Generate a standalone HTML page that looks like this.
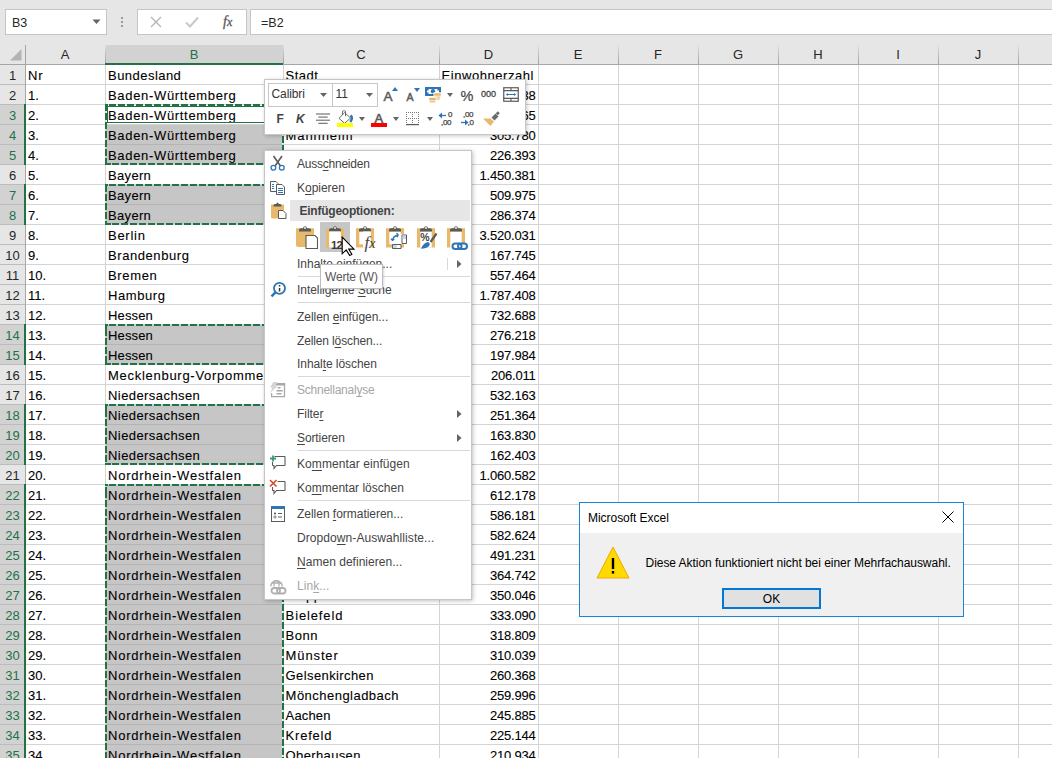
<!DOCTYPE html><html><head><meta charset="utf-8"><style>
*{box-sizing:border-box}
html,body{margin:0;padding:0}
body{width:1052px;height:758px;overflow:hidden;position:relative;background:#fff;font-family:"Liberation Sans", sans-serif;}
.a{position:absolute}
.t{position:absolute;white-space:pre;line-height:1;color:#000}
.cell{font-size:13px;-webkit-text-stroke:0.1px #000;letter-spacing:0.55px}
.num{font-size:13px;-webkit-text-stroke:0.1px #000;letter-spacing:-0.2px}
.hd{font-size:13px;color:#333;}
.mi{position:absolute;left:297px;font-size:11.7px;color:#262626;white-space:pre;line-height:1}
.u{text-decoration:underline;text-underline-offset:2px;text-decoration-thickness:1px}
</style></head><body>

<div class="a" style="left:0;top:0;width:1052px;height:45px;background:#e6e6e6"></div>
<div class="a" style="left:5px;top:9px;width:102px;height:26px;background:#fff;border:1px solid #c6c6c6"></div>
<div class="t" style="left:12px;top:17px;font-size:12.5px;color:#262626">B3</div>
<svg class="a" style="left:92px;top:19px" width="9" height="6"><path d="M0.5 0.5 L8.5 0.5 L4.5 5 Z" fill="#646464"/></svg>
<div class="a" style="left:121px;top:17px;width:2px;height:2px;background:#9a9a9a"></div>
<div class="a" style="left:121px;top:21px;width:2px;height:2px;background:#9a9a9a"></div>
<div class="a" style="left:121px;top:25px;width:2px;height:2px;background:#9a9a9a"></div>
<div class="a" style="left:137px;top:9px;width:110px;height:26px;background:#fff;border:1px solid #c6c6c6"></div>
<svg class="a" style="left:150px;top:16px" width="12" height="12"><path d="M1 1 L11 11 M11 1 L1 11" stroke="#b4b4b4" stroke-width="1.3"/></svg>
<svg class="a" style="left:185px;top:16px" width="14" height="12"><path d="M1 6.5 L5 10.5 L13 1.5" stroke="#c8c8c8" stroke-width="2" fill="none"/></svg>
<div class="t" style="left:223px;top:15px;font-family:'Liberation Serif',serif;font-style:italic;font-size:14px;color:#595959;-webkit-text-stroke:0.3px #595959">f<span style="font-size:12px">x</span></div>
<div class="a" style="left:250px;top:9px;width:810px;height:26px;background:#fff;border:1px solid #c6c6c6"></div>
<div class="t" style="left:261px;top:17px;font-size:12.5px;color:#262626">=B2</div>
<div class="a" style="left:0;top:45px;width:1052px;height:19px;background:#e6e6e6"></div>
<div class="a" style="left:0;top:64px;width:25px;height:694px;background:#e6e6e6"></div>
<div class="a" style="left:106px;top:45px;width:177px;height:19px;background:#d2d2d2"></div>
<svg class="a" style="left:0;top:45px" width="25" height="19"><path d="M10 15.5 L21.5 4 L21.5 15.5 Z" fill="#b4b4b4"/></svg>
<div class="a" style="left:0;top:105px;width:24px;height:19px;background:#d2d2d2"></div>
<div class="a" style="left:0;top:125px;width:24px;height:19px;background:#d2d2d2"></div>
<div class="a" style="left:0;top:145px;width:24px;height:19px;background:#d2d2d2"></div>
<div class="a" style="left:0;top:185px;width:24px;height:19px;background:#d2d2d2"></div>
<div class="a" style="left:0;top:205px;width:24px;height:19px;background:#d2d2d2"></div>
<div class="a" style="left:0;top:325px;width:24px;height:19px;background:#d2d2d2"></div>
<div class="a" style="left:0;top:345px;width:24px;height:19px;background:#d2d2d2"></div>
<div class="a" style="left:0;top:405px;width:24px;height:19px;background:#d2d2d2"></div>
<div class="a" style="left:0;top:425px;width:24px;height:19px;background:#d2d2d2"></div>
<div class="a" style="left:0;top:445px;width:24px;height:19px;background:#d2d2d2"></div>
<div class="a" style="left:0;top:485px;width:24px;height:19px;background:#d2d2d2"></div>
<div class="a" style="left:0;top:505px;width:24px;height:19px;background:#d2d2d2"></div>
<div class="a" style="left:0;top:525px;width:24px;height:19px;background:#d2d2d2"></div>
<div class="a" style="left:0;top:545px;width:24px;height:19px;background:#d2d2d2"></div>
<div class="a" style="left:0;top:565px;width:24px;height:19px;background:#d2d2d2"></div>
<div class="a" style="left:0;top:585px;width:24px;height:19px;background:#d2d2d2"></div>
<div class="a" style="left:0;top:605px;width:24px;height:19px;background:#d2d2d2"></div>
<div class="a" style="left:0;top:625px;width:24px;height:19px;background:#d2d2d2"></div>
<div class="a" style="left:0;top:645px;width:24px;height:19px;background:#d2d2d2"></div>
<div class="a" style="left:0;top:665px;width:24px;height:19px;background:#d2d2d2"></div>
<div class="a" style="left:0;top:685px;width:24px;height:19px;background:#d2d2d2"></div>
<div class="a" style="left:0;top:705px;width:24px;height:19px;background:#d2d2d2"></div>
<div class="a" style="left:0;top:725px;width:24px;height:19px;background:#d2d2d2"></div>
<div class="a" style="left:0;top:745px;width:24px;height:19px;background:#d2d2d2"></div>
<div class="a" style="left:106px;top:124px;width:176px;height:20px;background:#c6c6c6"></div>
<div class="a" style="left:106px;top:144px;width:176px;height:20px;background:#c6c6c6"></div>
<div class="a" style="left:106px;top:184px;width:176px;height:20px;background:#c6c6c6"></div>
<div class="a" style="left:106px;top:204px;width:176px;height:20px;background:#c6c6c6"></div>
<div class="a" style="left:106px;top:324px;width:176px;height:20px;background:#c6c6c6"></div>
<div class="a" style="left:106px;top:344px;width:176px;height:20px;background:#c6c6c6"></div>
<div class="a" style="left:106px;top:404px;width:176px;height:20px;background:#c6c6c6"></div>
<div class="a" style="left:106px;top:424px;width:176px;height:20px;background:#c6c6c6"></div>
<div class="a" style="left:106px;top:444px;width:176px;height:20px;background:#c6c6c6"></div>
<div class="a" style="left:106px;top:484px;width:176px;height:20px;background:#c6c6c6"></div>
<div class="a" style="left:106px;top:504px;width:176px;height:20px;background:#c6c6c6"></div>
<div class="a" style="left:106px;top:524px;width:176px;height:20px;background:#c6c6c6"></div>
<div class="a" style="left:106px;top:544px;width:176px;height:20px;background:#c6c6c6"></div>
<div class="a" style="left:106px;top:564px;width:176px;height:20px;background:#c6c6c6"></div>
<div class="a" style="left:106px;top:584px;width:176px;height:20px;background:#c6c6c6"></div>
<div class="a" style="left:106px;top:604px;width:176px;height:20px;background:#c6c6c6"></div>
<div class="a" style="left:106px;top:624px;width:176px;height:20px;background:#c6c6c6"></div>
<div class="a" style="left:106px;top:644px;width:176px;height:20px;background:#c6c6c6"></div>
<div class="a" style="left:106px;top:664px;width:176px;height:20px;background:#c6c6c6"></div>
<div class="a" style="left:106px;top:684px;width:176px;height:20px;background:#c6c6c6"></div>
<div class="a" style="left:106px;top:704px;width:176px;height:20px;background:#c6c6c6"></div>
<div class="a" style="left:106px;top:724px;width:176px;height:20px;background:#c6c6c6"></div>
<div class="a" style="left:106px;top:744px;width:176px;height:20px;background:#c6c6c6"></div>
<div class="a" style="left:25px;top:84px;width:1027px;height:1px;background:#d4d4d4"></div>
<div class="a" style="left:0;top:84px;width:25px;height:1px;background:#bcbcbc"></div>
<div class="a" style="left:25px;top:104px;width:1027px;height:1px;background:#d4d4d4"></div>
<div class="a" style="left:0;top:104px;width:25px;height:1px;background:#bcbcbc"></div>
<div class="a" style="left:25px;top:124px;width:1027px;height:1px;background:#d4d4d4"></div>
<div class="a" style="left:0;top:124px;width:25px;height:1px;background:#bcbcbc"></div>
<div class="a" style="left:25px;top:144px;width:1027px;height:1px;background:#d4d4d4"></div>
<div class="a" style="left:0;top:144px;width:25px;height:1px;background:#bcbcbc"></div>
<div class="a" style="left:25px;top:164px;width:1027px;height:1px;background:#d4d4d4"></div>
<div class="a" style="left:0;top:164px;width:25px;height:1px;background:#bcbcbc"></div>
<div class="a" style="left:25px;top:184px;width:1027px;height:1px;background:#d4d4d4"></div>
<div class="a" style="left:0;top:184px;width:25px;height:1px;background:#bcbcbc"></div>
<div class="a" style="left:25px;top:204px;width:1027px;height:1px;background:#d4d4d4"></div>
<div class="a" style="left:0;top:204px;width:25px;height:1px;background:#bcbcbc"></div>
<div class="a" style="left:25px;top:224px;width:1027px;height:1px;background:#d4d4d4"></div>
<div class="a" style="left:0;top:224px;width:25px;height:1px;background:#bcbcbc"></div>
<div class="a" style="left:25px;top:244px;width:1027px;height:1px;background:#d4d4d4"></div>
<div class="a" style="left:0;top:244px;width:25px;height:1px;background:#bcbcbc"></div>
<div class="a" style="left:25px;top:264px;width:1027px;height:1px;background:#d4d4d4"></div>
<div class="a" style="left:0;top:264px;width:25px;height:1px;background:#bcbcbc"></div>
<div class="a" style="left:25px;top:284px;width:1027px;height:1px;background:#d4d4d4"></div>
<div class="a" style="left:0;top:284px;width:25px;height:1px;background:#bcbcbc"></div>
<div class="a" style="left:25px;top:304px;width:1027px;height:1px;background:#d4d4d4"></div>
<div class="a" style="left:0;top:304px;width:25px;height:1px;background:#bcbcbc"></div>
<div class="a" style="left:25px;top:324px;width:1027px;height:1px;background:#d4d4d4"></div>
<div class="a" style="left:0;top:324px;width:25px;height:1px;background:#bcbcbc"></div>
<div class="a" style="left:25px;top:344px;width:1027px;height:1px;background:#d4d4d4"></div>
<div class="a" style="left:0;top:344px;width:25px;height:1px;background:#bcbcbc"></div>
<div class="a" style="left:25px;top:364px;width:1027px;height:1px;background:#d4d4d4"></div>
<div class="a" style="left:0;top:364px;width:25px;height:1px;background:#bcbcbc"></div>
<div class="a" style="left:25px;top:384px;width:1027px;height:1px;background:#d4d4d4"></div>
<div class="a" style="left:0;top:384px;width:25px;height:1px;background:#bcbcbc"></div>
<div class="a" style="left:25px;top:404px;width:1027px;height:1px;background:#d4d4d4"></div>
<div class="a" style="left:0;top:404px;width:25px;height:1px;background:#bcbcbc"></div>
<div class="a" style="left:25px;top:424px;width:1027px;height:1px;background:#d4d4d4"></div>
<div class="a" style="left:0;top:424px;width:25px;height:1px;background:#bcbcbc"></div>
<div class="a" style="left:25px;top:444px;width:1027px;height:1px;background:#d4d4d4"></div>
<div class="a" style="left:0;top:444px;width:25px;height:1px;background:#bcbcbc"></div>
<div class="a" style="left:25px;top:464px;width:1027px;height:1px;background:#d4d4d4"></div>
<div class="a" style="left:0;top:464px;width:25px;height:1px;background:#bcbcbc"></div>
<div class="a" style="left:25px;top:484px;width:1027px;height:1px;background:#d4d4d4"></div>
<div class="a" style="left:0;top:484px;width:25px;height:1px;background:#bcbcbc"></div>
<div class="a" style="left:25px;top:504px;width:1027px;height:1px;background:#d4d4d4"></div>
<div class="a" style="left:0;top:504px;width:25px;height:1px;background:#bcbcbc"></div>
<div class="a" style="left:25px;top:524px;width:1027px;height:1px;background:#d4d4d4"></div>
<div class="a" style="left:0;top:524px;width:25px;height:1px;background:#bcbcbc"></div>
<div class="a" style="left:25px;top:544px;width:1027px;height:1px;background:#d4d4d4"></div>
<div class="a" style="left:0;top:544px;width:25px;height:1px;background:#bcbcbc"></div>
<div class="a" style="left:25px;top:564px;width:1027px;height:1px;background:#d4d4d4"></div>
<div class="a" style="left:0;top:564px;width:25px;height:1px;background:#bcbcbc"></div>
<div class="a" style="left:25px;top:584px;width:1027px;height:1px;background:#d4d4d4"></div>
<div class="a" style="left:0;top:584px;width:25px;height:1px;background:#bcbcbc"></div>
<div class="a" style="left:25px;top:604px;width:1027px;height:1px;background:#d4d4d4"></div>
<div class="a" style="left:0;top:604px;width:25px;height:1px;background:#bcbcbc"></div>
<div class="a" style="left:25px;top:624px;width:1027px;height:1px;background:#d4d4d4"></div>
<div class="a" style="left:0;top:624px;width:25px;height:1px;background:#bcbcbc"></div>
<div class="a" style="left:25px;top:644px;width:1027px;height:1px;background:#d4d4d4"></div>
<div class="a" style="left:0;top:644px;width:25px;height:1px;background:#bcbcbc"></div>
<div class="a" style="left:25px;top:664px;width:1027px;height:1px;background:#d4d4d4"></div>
<div class="a" style="left:0;top:664px;width:25px;height:1px;background:#bcbcbc"></div>
<div class="a" style="left:25px;top:684px;width:1027px;height:1px;background:#d4d4d4"></div>
<div class="a" style="left:0;top:684px;width:25px;height:1px;background:#bcbcbc"></div>
<div class="a" style="left:25px;top:704px;width:1027px;height:1px;background:#d4d4d4"></div>
<div class="a" style="left:0;top:704px;width:25px;height:1px;background:#bcbcbc"></div>
<div class="a" style="left:25px;top:724px;width:1027px;height:1px;background:#d4d4d4"></div>
<div class="a" style="left:0;top:724px;width:25px;height:1px;background:#bcbcbc"></div>
<div class="a" style="left:25px;top:744px;width:1027px;height:1px;background:#d4d4d4"></div>
<div class="a" style="left:0;top:744px;width:25px;height:1px;background:#bcbcbc"></div>
<div class="a" style="left:25px;top:764px;width:1027px;height:1px;background:#d4d4d4"></div>
<div class="a" style="left:0;top:764px;width:25px;height:1px;background:#bcbcbc"></div>
<div class="a" style="left:106px;top:144px;width:176px;height:1px;background:#b4b4b4"></div>
<div class="a" style="left:106px;top:204px;width:176px;height:1px;background:#b4b4b4"></div>
<div class="a" style="left:106px;top:344px;width:176px;height:1px;background:#b4b4b4"></div>
<div class="a" style="left:106px;top:424px;width:176px;height:1px;background:#b4b4b4"></div>
<div class="a" style="left:106px;top:444px;width:176px;height:1px;background:#b4b4b4"></div>
<div class="a" style="left:106px;top:504px;width:176px;height:1px;background:#b4b4b4"></div>
<div class="a" style="left:106px;top:524px;width:176px;height:1px;background:#b4b4b4"></div>
<div class="a" style="left:106px;top:544px;width:176px;height:1px;background:#b4b4b4"></div>
<div class="a" style="left:106px;top:564px;width:176px;height:1px;background:#b4b4b4"></div>
<div class="a" style="left:106px;top:584px;width:176px;height:1px;background:#b4b4b4"></div>
<div class="a" style="left:106px;top:604px;width:176px;height:1px;background:#b4b4b4"></div>
<div class="a" style="left:106px;top:624px;width:176px;height:1px;background:#b4b4b4"></div>
<div class="a" style="left:106px;top:644px;width:176px;height:1px;background:#b4b4b4"></div>
<div class="a" style="left:106px;top:664px;width:176px;height:1px;background:#b4b4b4"></div>
<div class="a" style="left:106px;top:684px;width:176px;height:1px;background:#b4b4b4"></div>
<div class="a" style="left:106px;top:704px;width:176px;height:1px;background:#b4b4b4"></div>
<div class="a" style="left:106px;top:724px;width:176px;height:1px;background:#b4b4b4"></div>
<div class="a" style="left:106px;top:744px;width:176px;height:1px;background:#b4b4b4"></div>
<div class="a" style="left:105px;top:64px;width:1px;height:694px;background:#d4d4d4"></div>
<div class="a" style="left:105px;top:45px;width:1px;height:19px;background:linear-gradient(#e0e0e0,#9f9f9f)"></div>
<div class="a" style="left:283px;top:64px;width:1px;height:694px;background:#d4d4d4"></div>
<div class="a" style="left:283px;top:45px;width:1px;height:19px;background:linear-gradient(#e0e0e0,#9f9f9f)"></div>
<div class="a" style="left:439px;top:64px;width:1px;height:694px;background:#d4d4d4"></div>
<div class="a" style="left:439px;top:45px;width:1px;height:19px;background:linear-gradient(#e0e0e0,#9f9f9f)"></div>
<div class="a" style="left:538px;top:64px;width:1px;height:694px;background:#d4d4d4"></div>
<div class="a" style="left:538px;top:45px;width:1px;height:19px;background:linear-gradient(#e0e0e0,#9f9f9f)"></div>
<div class="a" style="left:618px;top:64px;width:1px;height:694px;background:#d4d4d4"></div>
<div class="a" style="left:618px;top:45px;width:1px;height:19px;background:linear-gradient(#e0e0e0,#9f9f9f)"></div>
<div class="a" style="left:698px;top:64px;width:1px;height:694px;background:#d4d4d4"></div>
<div class="a" style="left:698px;top:45px;width:1px;height:19px;background:linear-gradient(#e0e0e0,#9f9f9f)"></div>
<div class="a" style="left:778px;top:64px;width:1px;height:694px;background:#d4d4d4"></div>
<div class="a" style="left:778px;top:45px;width:1px;height:19px;background:linear-gradient(#e0e0e0,#9f9f9f)"></div>
<div class="a" style="left:858px;top:64px;width:1px;height:694px;background:#d4d4d4"></div>
<div class="a" style="left:858px;top:45px;width:1px;height:19px;background:linear-gradient(#e0e0e0,#9f9f9f)"></div>
<div class="a" style="left:938px;top:64px;width:1px;height:694px;background:#d4d4d4"></div>
<div class="a" style="left:938px;top:45px;width:1px;height:19px;background:linear-gradient(#e0e0e0,#9f9f9f)"></div>
<div class="a" style="left:1018px;top:64px;width:1px;height:694px;background:#d4d4d4"></div>
<div class="a" style="left:1018px;top:45px;width:1px;height:19px;background:linear-gradient(#e0e0e0,#9f9f9f)"></div>
<div class="a" style="left:1098px;top:64px;width:1px;height:694px;background:#d4d4d4"></div>
<div class="a" style="left:1098px;top:45px;width:1px;height:19px;background:linear-gradient(#e0e0e0,#9f9f9f)"></div>
<div class="a" style="left:0;top:64px;width:1052px;height:1px;background:#a6a6a6"></div>
<div class="a" style="left:25px;top:45px;width:1px;height:713px;background:#a6a6a6"></div>
<div class="a" style="left:105px;top:63px;width:178px;height:2px;background:#217346"></div>
<div class="a" style="left:24px;top:104px;width:2px;height:21px;background:#217346"></div>
<div class="a" style="left:24px;top:124px;width:2px;height:21px;background:#217346"></div>
<div class="a" style="left:24px;top:144px;width:2px;height:21px;background:#217346"></div>
<div class="a" style="left:24px;top:184px;width:2px;height:21px;background:#217346"></div>
<div class="a" style="left:24px;top:204px;width:2px;height:21px;background:#217346"></div>
<div class="a" style="left:24px;top:324px;width:2px;height:21px;background:#217346"></div>
<div class="a" style="left:24px;top:344px;width:2px;height:21px;background:#217346"></div>
<div class="a" style="left:24px;top:404px;width:2px;height:21px;background:#217346"></div>
<div class="a" style="left:24px;top:424px;width:2px;height:21px;background:#217346"></div>
<div class="a" style="left:24px;top:444px;width:2px;height:21px;background:#217346"></div>
<div class="a" style="left:24px;top:484px;width:2px;height:21px;background:#217346"></div>
<div class="a" style="left:24px;top:504px;width:2px;height:21px;background:#217346"></div>
<div class="a" style="left:24px;top:524px;width:2px;height:21px;background:#217346"></div>
<div class="a" style="left:24px;top:544px;width:2px;height:21px;background:#217346"></div>
<div class="a" style="left:24px;top:564px;width:2px;height:21px;background:#217346"></div>
<div class="a" style="left:24px;top:584px;width:2px;height:21px;background:#217346"></div>
<div class="a" style="left:24px;top:604px;width:2px;height:21px;background:#217346"></div>
<div class="a" style="left:24px;top:624px;width:2px;height:21px;background:#217346"></div>
<div class="a" style="left:24px;top:644px;width:2px;height:21px;background:#217346"></div>
<div class="a" style="left:24px;top:664px;width:2px;height:21px;background:#217346"></div>
<div class="a" style="left:24px;top:684px;width:2px;height:21px;background:#217346"></div>
<div class="a" style="left:24px;top:704px;width:2px;height:21px;background:#217346"></div>
<div class="a" style="left:24px;top:724px;width:2px;height:21px;background:#217346"></div>
<div class="a" style="left:24px;top:744px;width:2px;height:21px;background:#217346"></div>
<div class="t hd" style="left:25px;width:80px;text-align:center;top:48px;color:#262626">A</div>
<div class="t hd" style="left:105px;width:178px;text-align:center;top:48px;color:#217346">B</div>
<div class="t hd" style="left:283px;width:156px;text-align:center;top:48px;color:#262626">C</div>
<div class="t hd" style="left:439px;width:99px;text-align:center;top:48px;color:#262626">D</div>
<div class="t hd" style="left:538px;width:80px;text-align:center;top:48px;color:#262626">E</div>
<div class="t hd" style="left:618px;width:80px;text-align:center;top:48px;color:#262626">F</div>
<div class="t hd" style="left:698px;width:80px;text-align:center;top:48px;color:#262626">G</div>
<div class="t hd" style="left:778px;width:80px;text-align:center;top:48px;color:#262626">H</div>
<div class="t hd" style="left:858px;width:80px;text-align:center;top:48px;color:#262626">I</div>
<div class="t hd" style="left:938px;width:80px;text-align:center;top:48px;color:#262626">J</div>
<div class="t hd" style="left:1018px;width:80px;text-align:center;top:48px;color:#262626">K</div>
<div class="t hd" style="left:0;width:25px;text-align:center;top:69px;color:#262626">1</div>
<div class="t hd" style="left:0;width:25px;text-align:center;top:89px;color:#262626">2</div>
<div class="t hd" style="left:0;width:25px;text-align:center;top:109px;color:#217346">3</div>
<div class="t hd" style="left:0;width:25px;text-align:center;top:129px;color:#217346">4</div>
<div class="t hd" style="left:0;width:25px;text-align:center;top:149px;color:#217346">5</div>
<div class="t hd" style="left:0;width:25px;text-align:center;top:169px;color:#262626">6</div>
<div class="t hd" style="left:0;width:25px;text-align:center;top:189px;color:#217346">7</div>
<div class="t hd" style="left:0;width:25px;text-align:center;top:209px;color:#217346">8</div>
<div class="t hd" style="left:0;width:25px;text-align:center;top:229px;color:#262626">9</div>
<div class="t hd" style="left:0;width:25px;text-align:center;top:249px;color:#262626">10</div>
<div class="t hd" style="left:0;width:25px;text-align:center;top:269px;color:#262626">11</div>
<div class="t hd" style="left:0;width:25px;text-align:center;top:289px;color:#262626">12</div>
<div class="t hd" style="left:0;width:25px;text-align:center;top:309px;color:#262626">13</div>
<div class="t hd" style="left:0;width:25px;text-align:center;top:329px;color:#217346">14</div>
<div class="t hd" style="left:0;width:25px;text-align:center;top:349px;color:#217346">15</div>
<div class="t hd" style="left:0;width:25px;text-align:center;top:369px;color:#262626">16</div>
<div class="t hd" style="left:0;width:25px;text-align:center;top:389px;color:#262626">17</div>
<div class="t hd" style="left:0;width:25px;text-align:center;top:409px;color:#217346">18</div>
<div class="t hd" style="left:0;width:25px;text-align:center;top:429px;color:#217346">19</div>
<div class="t hd" style="left:0;width:25px;text-align:center;top:449px;color:#217346">20</div>
<div class="t hd" style="left:0;width:25px;text-align:center;top:469px;color:#262626">21</div>
<div class="t hd" style="left:0;width:25px;text-align:center;top:489px;color:#217346">22</div>
<div class="t hd" style="left:0;width:25px;text-align:center;top:509px;color:#217346">23</div>
<div class="t hd" style="left:0;width:25px;text-align:center;top:529px;color:#217346">24</div>
<div class="t hd" style="left:0;width:25px;text-align:center;top:549px;color:#217346">25</div>
<div class="t hd" style="left:0;width:25px;text-align:center;top:569px;color:#217346">26</div>
<div class="t hd" style="left:0;width:25px;text-align:center;top:589px;color:#217346">27</div>
<div class="t hd" style="left:0;width:25px;text-align:center;top:609px;color:#217346">28</div>
<div class="t hd" style="left:0;width:25px;text-align:center;top:629px;color:#217346">29</div>
<div class="t hd" style="left:0;width:25px;text-align:center;top:649px;color:#217346">30</div>
<div class="t hd" style="left:0;width:25px;text-align:center;top:669px;color:#217346">31</div>
<div class="t hd" style="left:0;width:25px;text-align:center;top:689px;color:#217346">32</div>
<div class="t hd" style="left:0;width:25px;text-align:center;top:709px;color:#217346">33</div>
<div class="t hd" style="left:0;width:25px;text-align:center;top:729px;color:#217346">34</div>
<div class="t hd" style="left:0;width:25px;text-align:center;top:749px;color:#217346">35</div>
<div class="t cell" style="left:28px;top:69px;letter-spacing:0.8px">Nr</div>
<div class="t cell" style="left:108px;top:69px;letter-spacing:0.465px">Bundesland</div>
<div class="t cell" style="left:285.5px;top:69px;letter-spacing:0.471px">Stadt</div>
<div class="t cell" style="left:441.5px;top:69px;letter-spacing:0.561px">Einwohnerzahl</div>
<div class="t cell" style="left:28px;top:89px;letter-spacing:0px">1.</div>
<div class="t cell" style="left:108px;top:89px;letter-spacing:0.675px">Baden-Württemberg</div>
<div class="t cell" style="left:285.6px;top:89px;letter-spacing:0.55px">Stuttgart</div>
<div class="t num" style="right:516.4px;top:89px">623.738</div>
<div class="t cell" style="left:28px;top:109px;letter-spacing:0px">2.</div>
<div class="t cell" style="left:108px;top:109px;letter-spacing:0.675px">Baden-Württemberg</div>
<div class="t cell" style="left:285.6px;top:109px;letter-spacing:0.55px">Karlsruhe</div>
<div class="t num" style="right:516.4px;top:109px">307.265</div>
<div class="t cell" style="left:28px;top:129px;letter-spacing:0px">3.</div>
<div class="t cell" style="left:108px;top:129px;letter-spacing:0.675px">Baden-Württemberg</div>
<div class="t cell" style="left:285.6px;top:129px;letter-spacing:0.89px">Mannheim</div>
<div class="t num" style="right:516.4px;top:129px">305.780</div>
<div class="t cell" style="left:28px;top:149px;letter-spacing:0px">4.</div>
<div class="t cell" style="left:108px;top:149px;letter-spacing:0.675px">Baden-Württemberg</div>
<div class="t cell" style="left:285.6px;top:149px;letter-spacing:0.55px">Freiburg im Breisgau</div>
<div class="t num" style="right:516.4px;top:149px">226.393</div>
<div class="t cell" style="left:28px;top:169px;letter-spacing:0px">5.</div>
<div class="t cell" style="left:108px;top:169px;letter-spacing:0.333px">Bayern</div>
<div class="t cell" style="left:285.6px;top:169px;letter-spacing:0.55px">München</div>
<div class="t num" style="right:516.4px;top:169px">1.450.381</div>
<div class="t cell" style="left:28px;top:189px;letter-spacing:0px">6.</div>
<div class="t cell" style="left:108px;top:189px;letter-spacing:0.333px">Bayern</div>
<div class="t cell" style="left:285.6px;top:189px;letter-spacing:0.55px">Nürnberg</div>
<div class="t num" style="right:516.4px;top:189px">509.975</div>
<div class="t cell" style="left:28px;top:209px;letter-spacing:0px">7.</div>
<div class="t cell" style="left:108px;top:209px;letter-spacing:0.333px">Bayern</div>
<div class="t cell" style="left:285.6px;top:209px;letter-spacing:0.55px">Augsburg</div>
<div class="t num" style="right:516.4px;top:209px">286.374</div>
<div class="t cell" style="left:28px;top:229px;letter-spacing:0px">8.</div>
<div class="t cell" style="left:108px;top:229px;letter-spacing:0.724px">Berlin</div>
<div class="t cell" style="left:285.6px;top:229px;letter-spacing:0.724px">Berlin</div>
<div class="t num" style="right:516.4px;top:229px">3.520.031</div>
<div class="t cell" style="left:28px;top:249px;letter-spacing:0px">9.</div>
<div class="t cell" style="left:108px;top:249px;letter-spacing:0.569px">Brandenburg</div>
<div class="t cell" style="left:285.6px;top:249px;letter-spacing:0.55px">Potsdam</div>
<div class="t num" style="right:516.4px;top:249px">167.745</div>
<div class="t cell" style="left:28px;top:269px;letter-spacing:0px">10.</div>
<div class="t cell" style="left:108px;top:269px;letter-spacing:0.667px">Bremen</div>
<div class="t cell" style="left:285.6px;top:269px;letter-spacing:0.667px">Bremen</div>
<div class="t num" style="right:516.4px;top:269px">557.464</div>
<div class="t cell" style="left:28px;top:289px;letter-spacing:0px">11.</div>
<div class="t cell" style="left:108px;top:289px;letter-spacing:0.565px">Hamburg</div>
<div class="t cell" style="left:285.6px;top:289px;letter-spacing:0.565px">Hamburg</div>
<div class="t num" style="right:516.4px;top:289px">1.787.408</div>
<div class="t cell" style="left:28px;top:309px;letter-spacing:0px">12.</div>
<div class="t cell" style="left:108px;top:309px;letter-spacing:0.155px">Hessen</div>
<div class="t cell" style="left:285.6px;top:309px;letter-spacing:0.55px">Frankfurt am Main</div>
<div class="t num" style="right:516.4px;top:309px">732.688</div>
<div class="t cell" style="left:28px;top:329px;letter-spacing:0px">13.</div>
<div class="t cell" style="left:108px;top:329px;letter-spacing:0.155px">Hessen</div>
<div class="t cell" style="left:285.6px;top:329px;letter-spacing:0.55px">Wiesbaden</div>
<div class="t num" style="right:516.4px;top:329px">276.218</div>
<div class="t cell" style="left:28px;top:349px;letter-spacing:0px">14.</div>
<div class="t cell" style="left:108px;top:349px;letter-spacing:0.155px">Hessen</div>
<div class="t cell" style="left:285.6px;top:349px;letter-spacing:0.55px">Kassel</div>
<div class="t num" style="right:516.4px;top:349px">197.984</div>
<div class="t cell" style="left:28px;top:369px;letter-spacing:0px">15.</div>
<div class="t cell" style="left:108px;top:369px;letter-spacing:0.72px">Mecklenburg-Vorpommern</div>
<div class="t cell" style="left:285.6px;top:369px;letter-spacing:0.55px">Rostock</div>
<div class="t num" style="right:516.4px;top:369px">206.011</div>
<div class="t cell" style="left:28px;top:389px;letter-spacing:0px">16.</div>
<div class="t cell" style="left:108px;top:389px;letter-spacing:0.428px">Niedersachsen</div>
<div class="t cell" style="left:285.6px;top:389px;letter-spacing:0.55px">Hannover</div>
<div class="t num" style="right:516.4px;top:389px">532.163</div>
<div class="t cell" style="left:28px;top:409px;letter-spacing:0px">17.</div>
<div class="t cell" style="left:108px;top:409px;letter-spacing:0.428px">Niedersachsen</div>
<div class="t cell" style="left:285.6px;top:409px;letter-spacing:0.55px">Braunschweig</div>
<div class="t num" style="right:516.4px;top:409px">251.364</div>
<div class="t cell" style="left:28px;top:429px;letter-spacing:0px">18.</div>
<div class="t cell" style="left:108px;top:429px;letter-spacing:0.428px">Niedersachsen</div>
<div class="t cell" style="left:285.6px;top:429px;letter-spacing:0.55px">Oldenburg</div>
<div class="t num" style="right:516.4px;top:429px">163.830</div>
<div class="t cell" style="left:28px;top:449px;letter-spacing:0px">19.</div>
<div class="t cell" style="left:108px;top:449px;letter-spacing:0.428px">Niedersachsen</div>
<div class="t cell" style="left:285.6px;top:449px;letter-spacing:0.55px">Osnabrück</div>
<div class="t num" style="right:516.4px;top:449px">162.403</div>
<div class="t cell" style="left:28px;top:469px;letter-spacing:0px">20.</div>
<div class="t cell" style="left:108px;top:469px;letter-spacing:0.771px">Nordrhein-Westfalen</div>
<div class="t cell" style="left:285.6px;top:469px;letter-spacing:0.55px">Köln</div>
<div class="t num" style="right:516.4px;top:469px">1.060.582</div>
<div class="t cell" style="left:28px;top:489px;letter-spacing:0px">21.</div>
<div class="t cell" style="left:108px;top:489px;letter-spacing:0.771px">Nordrhein-Westfalen</div>
<div class="t cell" style="left:285.6px;top:489px;letter-spacing:0.55px">Düsseldorf</div>
<div class="t num" style="right:516.4px;top:489px">612.178</div>
<div class="t cell" style="left:28px;top:509px;letter-spacing:0px">22.</div>
<div class="t cell" style="left:108px;top:509px;letter-spacing:0.771px">Nordrhein-Westfalen</div>
<div class="t cell" style="left:285.6px;top:509px;letter-spacing:0.55px">Dortmund</div>
<div class="t num" style="right:516.4px;top:509px">586.181</div>
<div class="t cell" style="left:28px;top:529px;letter-spacing:0px">23.</div>
<div class="t cell" style="left:108px;top:529px;letter-spacing:0.771px">Nordrhein-Westfalen</div>
<div class="t cell" style="left:285.6px;top:529px;letter-spacing:0.55px">Essen</div>
<div class="t num" style="right:516.4px;top:529px">582.624</div>
<div class="t cell" style="left:28px;top:549px;letter-spacing:0px">24.</div>
<div class="t cell" style="left:108px;top:549px;letter-spacing:0.771px">Nordrhein-Westfalen</div>
<div class="t cell" style="left:285.6px;top:549px;letter-spacing:0.55px">Duisburg</div>
<div class="t num" style="right:516.4px;top:549px">491.231</div>
<div class="t cell" style="left:28px;top:569px;letter-spacing:0px">25.</div>
<div class="t cell" style="left:108px;top:569px;letter-spacing:0.771px">Nordrhein-Westfalen</div>
<div class="t cell" style="left:285.6px;top:569px;letter-spacing:0.55px">Bochum</div>
<div class="t num" style="right:516.4px;top:569px">364.742</div>
<div class="t cell" style="left:28px;top:589px;letter-spacing:0px">26.</div>
<div class="t cell" style="left:108px;top:589px;letter-spacing:0.771px">Nordrhein-Westfalen</div>
<div class="t cell" style="left:285.6px;top:589px;letter-spacing:0.55px">Wuppertal</div>
<div class="t num" style="right:516.4px;top:589px">350.046</div>
<div class="t cell" style="left:28px;top:609px;letter-spacing:0px">27.</div>
<div class="t cell" style="left:108px;top:609px;letter-spacing:0.771px">Nordrhein-Westfalen</div>
<div class="t cell" style="left:285.6px;top:609px;letter-spacing:0.873px">Bielefeld</div>
<div class="t num" style="right:516.4px;top:609px">333.090</div>
<div class="t cell" style="left:28px;top:629px;letter-spacing:0px">28.</div>
<div class="t cell" style="left:108px;top:629px;letter-spacing:0.771px">Nordrhein-Westfalen</div>
<div class="t cell" style="left:285.6px;top:629px;letter-spacing:0.498px">Bonn</div>
<div class="t num" style="right:516.4px;top:629px">318.809</div>
<div class="t cell" style="left:28px;top:649px;letter-spacing:0px">29.</div>
<div class="t cell" style="left:108px;top:649px;letter-spacing:0.771px">Nordrhein-Westfalen</div>
<div class="t cell" style="left:285.6px;top:649px;letter-spacing:0.874px">Münster</div>
<div class="t num" style="right:516.4px;top:649px">310.039</div>
<div class="t cell" style="left:28px;top:669px;letter-spacing:0px">30.</div>
<div class="t cell" style="left:108px;top:669px;letter-spacing:0.771px">Nordrhein-Westfalen</div>
<div class="t cell" style="left:285.6px;top:669px;letter-spacing:0.396px">Gelsenkirchen</div>
<div class="t num" style="right:516.4px;top:669px">260.368</div>
<div class="t cell" style="left:28px;top:689px;letter-spacing:0px">31.</div>
<div class="t cell" style="left:108px;top:689px;letter-spacing:0.771px">Nordrhein-Westfalen</div>
<div class="t cell" style="left:285.6px;top:689px;letter-spacing:0.472px">Mönchengladbach</div>
<div class="t num" style="right:516.4px;top:689px">259.996</div>
<div class="t cell" style="left:28px;top:709px;letter-spacing:0px">32.</div>
<div class="t cell" style="left:108px;top:709px;letter-spacing:0.771px">Nordrhein-Westfalen</div>
<div class="t cell" style="left:285.6px;top:709px;letter-spacing:0.153px">Aachen</div>
<div class="t num" style="right:516.4px;top:709px">245.885</div>
<div class="t cell" style="left:28px;top:729px;letter-spacing:0px">33.</div>
<div class="t cell" style="left:108px;top:729px;letter-spacing:0.771px">Nordrhein-Westfalen</div>
<div class="t cell" style="left:285.6px;top:729px;letter-spacing:0.778px">Krefeld</div>
<div class="t num" style="right:516.4px;top:729px">225.144</div>
<div class="t cell" style="left:28px;top:749px;letter-spacing:0px">34.</div>
<div class="t cell" style="left:108px;top:749px;letter-spacing:0.771px">Nordrhein-Westfalen</div>
<div class="t cell" style="left:285.6px;top:749px;letter-spacing:0.367px">Oberhausen</div>
<div class="t num" style="right:516.4px;top:749px">210.934</div>
<div class="a" style="left:105px;top:104px;width:2px;height:61px;background:repeating-linear-gradient(180deg,#217346 0 7px,transparent 7px 9px);background-position:0 0px"></div>
<div class="a" style="left:282px;top:104px;width:2px;height:61px;background:repeating-linear-gradient(180deg,#217346 0 7px,transparent 7px 9px);background-position:0 5px"></div>
<div class="a" style="left:105px;top:104px;width:179px;height:2px;background:repeating-linear-gradient(90deg,#217346 0 7px,transparent 7px 9px);background-position:4px 0"></div>
<div class="a" style="left:105px;top:163px;width:179px;height:2px;background:repeating-linear-gradient(90deg,#217346 0 7px,transparent 7px 9px);background-position:7px 0"></div>
<div class="a" style="left:105px;top:184px;width:2px;height:41px;background:repeating-linear-gradient(180deg,#217346 0 7px,transparent 7px 9px);background-position:0 1px"></div>
<div class="a" style="left:282px;top:184px;width:2px;height:41px;background:repeating-linear-gradient(180deg,#217346 0 7px,transparent 7px 9px);background-position:0 6px"></div>
<div class="a" style="left:105px;top:184px;width:179px;height:2px;background:repeating-linear-gradient(90deg,#217346 0 7px,transparent 7px 9px);background-position:4px 0"></div>
<div class="a" style="left:105px;top:223px;width:179px;height:2px;background:repeating-linear-gradient(90deg,#217346 0 7px,transparent 7px 9px);background-position:7px 0"></div>
<div class="a" style="left:105px;top:324px;width:2px;height:41px;background:repeating-linear-gradient(180deg,#217346 0 7px,transparent 7px 9px);background-position:0 5px"></div>
<div class="a" style="left:282px;top:324px;width:2px;height:41px;background:repeating-linear-gradient(180deg,#217346 0 7px,transparent 7px 9px);background-position:0 1px"></div>
<div class="a" style="left:105px;top:324px;width:179px;height:2px;background:repeating-linear-gradient(90deg,#217346 0 7px,transparent 7px 9px);background-position:4px 0"></div>
<div class="a" style="left:105px;top:363px;width:179px;height:2px;background:repeating-linear-gradient(90deg,#217346 0 7px,transparent 7px 9px);background-position:7px 0"></div>
<div class="a" style="left:105px;top:404px;width:2px;height:61px;background:repeating-linear-gradient(180deg,#217346 0 7px,transparent 7px 9px);background-position:0 6px"></div>
<div class="a" style="left:282px;top:404px;width:2px;height:61px;background:repeating-linear-gradient(180deg,#217346 0 7px,transparent 7px 9px);background-position:0 2px"></div>
<div class="a" style="left:105px;top:404px;width:179px;height:2px;background:repeating-linear-gradient(90deg,#217346 0 7px,transparent 7px 9px);background-position:4px 0"></div>
<div class="a" style="left:105px;top:463px;width:179px;height:2px;background:repeating-linear-gradient(90deg,#217346 0 7px,transparent 7px 9px);background-position:7px 0"></div>
<div class="a" style="left:105px;top:484px;width:2px;height:301px;background:repeating-linear-gradient(180deg,#217346 0 7px,transparent 7px 9px);background-position:0 7px"></div>
<div class="a" style="left:282px;top:484px;width:2px;height:301px;background:repeating-linear-gradient(180deg,#217346 0 7px,transparent 7px 9px);background-position:0 3px"></div>
<div class="a" style="left:105px;top:484px;width:179px;height:2px;background:repeating-linear-gradient(90deg,#217346 0 7px,transparent 7px 9px);background-position:4px 0"></div>
<div class="a" style="left:105px;top:783px;width:179px;height:2px;background:repeating-linear-gradient(90deg,#217346 0 7px,transparent 7px 9px);background-position:7px 0"></div>
<div class="a" style="left:107px;top:106px;width:176px;height:17px;border:1px solid #217346;border-right:none"></div>
<div class="a" style="left:264px;top:79px;width:262px;height:56px;background:#fff;border:1px solid #c6c6c6;box-shadow:1px 1px 4px rgba(0,0,0,0.22)"></div>
<div class="a" style="left:268px;top:83px;width:65px;height:24px;border:1px solid #c6c6c6;background:#fff"></div>
<div class="t" style="left:271.5px;top:88.34px;font-size:12px;color:#333;letter-spacing:-0.1px">Calibri</div>
<svg class="a" style="left:320px;top:93px" width="7" height="4"><path d="M0 0H7L3.5 4Z" fill="#646464"/></svg>
<div class="a" style="left:332px;top:83px;width:46px;height:24px;border:1px solid #c6c6c6;background:#fff"></div>
<div class="t" style="left:335.5px;top:88.34px;font-size:12px;color:#333;">11</div>
<svg class="a" style="left:366px;top:93px" width="7" height="4"><path d="M0 0H7L3.5 4Z" fill="#646464"/></svg>
<div class="t" style="left:383.5px;top:89.57px;font-size:13.5px;color:#5a5a5a;-webkit-text-stroke:0.5px #5a5a5a">A</div>
<svg class="a" style="left:392px;top:87px" width="6" height="4"><path d="M0 4H6L3 0Z" fill="#2e75b6"/></svg>
<div class="t" style="left:406.5px;top:92.11px;font-size:10.5px;color:#5a5a5a;-webkit-text-stroke:0.5px #5a5a5a">A</div>
<svg class="a" style="left:414px;top:88px" width="6" height="4"><path d="M0 0H6L3 4Z" fill="#2e75b6"/></svg>
<svg class="a" style="left:424px;top:86px" width="18" height="18"><rect x="1" y="1" width="16" height="9" fill="#2e75b6"/><rect x="3" y="3" width="12" height="5" fill="#fff"/><path d="M3 3H4.6V4.6H3Z M13.4 3H15V4.6H13.4Z M3 6.4H4.6V8H3Z" fill="#2e75b6"/><circle cx="9" cy="5.3" r="2.2" fill="#2e75b6"/><path d="M9.5 6.3H18V15H9.5Z" fill="#fff"/><rect x="10" y="7.2" width="7" height="2.6" rx="1.3" fill="#e8b96a"/><rect x="10.6" y="10.6" width="5.8" height="1.1" fill="#e8b96a"/><rect x="11.2" y="12.5" width="4.6" height="1.1" fill="#e8b96a"/><path d="M4.5 11H12.5V18H4.5Z" fill="#fff"/><rect x="5" y="11.8" width="7" height="2.6" rx="1.3" fill="#e8b96a"/><rect x="5.6" y="15.3" width="5.8" height="1.1" fill="#e8b96a"/></svg>
<svg class="a" style="left:447px;top:93px" width="6" height="4"><path d="M0 0H6L3 4Z" fill="#646464"/></svg>
<div class="t" style="left:460.5px;top:88.93px;font-size:14.5px;color:#444;-webkit-text-stroke:0.2px #444">%</div>
<div class="t" style="left:481px;top:90.38px;font-size:9px;color:#444;letter-spacing:0px;-webkit-text-stroke:0.3px #444">000</div>
<svg class="a" style="left:503px;top:87px" width="16" height="15"><rect x="0.75" y="0.75" width="14.5" height="13.5" fill="none" stroke="#5a5a5a" stroke-width="1.2"/><path d="M0.75 3.6H15M0.75 11.4H15M8 0.75V3.6M8 11.4V14" stroke="#5a5a5a" stroke-width="1.1"/><path d="M3.5 7.5H12.5" stroke="#2e75b6" stroke-width="1"/><path d="M3 7.5L5 6V9Z M13 7.5L11 6V9Z" fill="#2e75b6"/></svg>
<div class="t" style="left:276.5px;top:112.84px;font-size:12px;color:#444;font-weight:bold">F</div>
<div class="t" style="left:296px;top:112.84px;font-size:12px;color:#444;font-weight:bold;font-style:italic">K</div>
<svg class="a" style="left:316px;top:113px" width="14" height="11"><path d="M0 1H14M2.3 4.1H11.7M0 7.2H14M2.3 10.3H11.7" stroke="#5a5a5a" stroke-width="1"/></svg>
<svg class="a" style="left:336px;top:110px" width="18" height="18"><path d="M3 8.3L8.6 2.6L14.6 8L8.6 13.3Z" fill="#fff" stroke="#5a5a5a" stroke-width="0.9"/><path d="M6.5 4.5V1.5Q6.5 0.8 7.5 0.8H8.5Q9.5 0.8 9.5 1.5V6.2" fill="none" stroke="#5a5a5a" stroke-width="0.9"/><path d="M14.5 5.5Q17.5 7.5 14.3 12" stroke="#2e75b6" stroke-width="2.4" fill="none"/><rect x="1" y="13" width="16" height="4" fill="#ffff00"/></svg>
<svg class="a" style="left:359px;top:117px" width="6" height="4"><path d="M0 0H6L3 4Z" fill="#646464"/></svg>
<div class="t" style="left:374.5px;top:111.60px;font-size:13px;color:#5a5a5a;-webkit-text-stroke:0.6px #5a5a5a">A</div>
<div class="a" style="left:371px;top:123px;width:16px;height:4px;background:#ff0000"></div>
<svg class="a" style="left:393px;top:117px" width="6" height="4"><path d="M0 0H6L3 4Z" fill="#646464"/></svg>
<svg class="a" style="left:406px;top:112px" width="14" height="14"><rect x="0" y="0" width="1" height="1" fill="#7a7a7a"/><rect x="2" y="0" width="1" height="1" fill="#7a7a7a"/><rect x="4" y="0" width="1" height="1" fill="#7a7a7a"/><rect x="6" y="0" width="1" height="1" fill="#7a7a7a"/><rect x="8" y="0" width="1" height="1" fill="#7a7a7a"/><rect x="10" y="0" width="1" height="1" fill="#7a7a7a"/><rect x="12" y="0" width="1" height="1" fill="#7a7a7a"/><rect x="0" y="2" width="1" height="1" fill="#7a7a7a"/><rect x="6" y="2" width="1" height="1" fill="#7a7a7a"/><rect x="12" y="2" width="1" height="1" fill="#7a7a7a"/><rect x="0" y="4" width="1" height="1" fill="#7a7a7a"/><rect x="6" y="4" width="1" height="1" fill="#7a7a7a"/><rect x="12" y="4" width="1" height="1" fill="#7a7a7a"/><rect x="0" y="6" width="1" height="1" fill="#7a7a7a"/><rect x="2" y="6" width="1" height="1" fill="#7a7a7a"/><rect x="4" y="6" width="1" height="1" fill="#7a7a7a"/><rect x="6" y="6" width="1" height="1" fill="#7a7a7a"/><rect x="8" y="6" width="1" height="1" fill="#7a7a7a"/><rect x="10" y="6" width="1" height="1" fill="#7a7a7a"/><rect x="12" y="6" width="1" height="1" fill="#7a7a7a"/><rect x="0" y="8" width="1" height="1" fill="#7a7a7a"/><rect x="6" y="8" width="1" height="1" fill="#7a7a7a"/><rect x="12" y="8" width="1" height="1" fill="#7a7a7a"/><rect x="0" y="10" width="1" height="1" fill="#7a7a7a"/><rect x="6" y="10" width="1" height="1" fill="#7a7a7a"/><rect x="12" y="10" width="1" height="1" fill="#7a7a7a"/><rect x="0" y="12" width="13" height="1.2" fill="#5a5a5a"/></svg>
<svg class="a" style="left:427px;top:117px" width="6" height="4"><path d="M0 0H6L3 4Z" fill="#646464"/></svg>
<svg class="a" style="left:438px;top:112px" width="9" height="7"><path d="M1.5 3.5H8" stroke="#2e75b6" stroke-width="1.3"/><path d="M0.5 3.5L4 0.5V6.5Z" fill="#2e75b6"/></svg>
<div class="t" style="left:448px;top:110.83px;font-size:8px;color:#444;-webkit-text-stroke:0.25px #444">0</div>
<div class="t" style="left:441px;top:119.23px;font-size:8px;color:#444;-webkit-text-stroke:0.25px #444;letter-spacing:-0.3px">,00</div>
<div class="t" style="left:463px;top:110.83px;font-size:8px;color:#444;-webkit-text-stroke:0.25px #444;letter-spacing:-0.3px">,00</div>
<svg class="a" style="left:460px;top:119px" width="9" height="7"><path d="M1 3.5H7.5" stroke="#2e75b6" stroke-width="1.3"/><path d="M8.5 3.5L5 0.5V6.5Z" fill="#2e75b6"/></svg>
<div class="t" style="left:467.5px;top:119.23px;font-size:8px;color:#444;-webkit-text-stroke:0.25px #444;letter-spacing:-0.3px">,0</div>
<svg class="a" style="left:482px;top:111px" width="18" height="16"><path d="M9.5 6.5L13.5 2.5L16.5 5.5L12.5 9.5Z" fill="#6a6a6a"/><path d="M13.8 2.2L15.8 0.2L17.8 2.2L15.8 4.2Z" fill="#6a6a6a"/><path d="M1 7.5H8.5L12 10.5L8.5 15Z" fill="#e8b96a"/></svg>
<div class="a" style="left:264px;top:150px;width:208px;height:450px;background:#fff;border:1px solid #c6c6c6;box-shadow:1px 1px 4px rgba(0,0,0,0.25)"></div>
<div class="t" style="left:297px;top:158.14px;font-size:12px;color:#444444;letter-spacing:-0.235px">Auss<span class="u">c</span>hneiden</div>
<div class="t" style="left:297px;top:181.84px;font-size:12px;color:#444444;letter-spacing:-0.034px">K<span class="u">o</span>pieren</div>
<div class="a" style="left:290px;top:200px;width:180px;height:21px;background:#e6e6e6"></div>
<div class="t" style="left:299.5px;top:205.14px;font-size:12px;color:#444;font-weight:bold;letter-spacing:-0.235px">Einfügeoptionen:</div>
<div class="a" style="left:320px;top:222px;width:30px;height:30px;background:#c6c6c6"></div>
<div class="t" style="left:297px;top:258.24px;font-size:12px;color:#444444;letter-spacing:-0.011px">Inhal<span class="u">t</span>e einfügen...</div>
<div class="a" style="left:447px;top:258px;width:1px;height:12px;background:#d9d9d9"></div>
<svg class="a" style="left:457px;top:260px" width="5" height="8"><path d="M0 0L4.5 4L0 8Z" fill="#646464"/></svg>
<div class="a" style="left:298px;top:276px;width:172px;height:1px;background:#d9d9d9"></div>
<div class="t" style="left:297px;top:283.94px;font-size:12px;color:#444444;letter-spacing:-0.05px">Intelligente <span class="u">S</span>uche</div>
<div class="a" style="left:298px;top:302px;width:172px;height:1px;background:#d9d9d9"></div>
<div class="t" style="left:297px;top:311.14px;font-size:12px;color:#444444;letter-spacing:-0.05px">Zellen <span class="u">e</span>infügen...</div>
<div class="t" style="left:297px;top:335.14px;font-size:12px;color:#444444;letter-spacing:-0.136px">Zellen l<span class="u">ö</span>schen...</div>
<div class="t" style="left:297px;top:358.44px;font-size:12px;color:#444444;letter-spacing:-0.066px">Inhal<span class="u">t</span>e löschen</div>
<div class="a" style="left:298px;top:376px;width:172px;height:1px;background:#d9d9d9"></div>
<div class="t" style="left:297px;top:384.44px;font-size:12px;color:#a6a6a6;letter-spacing:-0.244px">Schnellanal<span class="u">y</span>se</div>
<div class="t" style="left:297px;top:408.44px;font-size:12px;color:#444444;letter-spacing:-0.059px">Filte<span class="u">r</span></div>
<svg class="a" style="left:457px;top:410px" width="5" height="8"><path d="M0 0L4.5 4L0 8Z" fill="#646464"/></svg>
<div class="t" style="left:297px;top:432.44px;font-size:12px;color:#444444;letter-spacing:-0.112px"><span class="u">S</span>ortieren</div>
<svg class="a" style="left:457px;top:434px" width="5" height="8"><path d="M0 0L4.5 4L0 8Z" fill="#646464"/></svg>
<div class="a" style="left:298px;top:450px;width:172px;height:1px;background:#d9d9d9"></div>
<div class="t" style="left:297px;top:458.24px;font-size:12px;color:#444444;letter-spacing:0.082px">Ko<span class="u">m</span>mentar einfügen</div>
<div class="t" style="left:297px;top:482.24px;font-size:12px;color:#444444;letter-spacing:0.005px">Ko<span class="u">m</span>mentar löschen</div>
<div class="a" style="left:298px;top:500px;width:172px;height:1px;background:#d9d9d9"></div>
<div class="t" style="left:297px;top:508.24px;font-size:12px;color:#444444;letter-spacing:-0.025px">Zellen <span class="u">f</span>ormatieren...</div>
<div class="t" style="left:297px;top:532.44px;font-size:12px;color:#444444;letter-spacing:0.079px">Dropdo<span class="u">w</span>n-Auswahlliste...</div>
<div class="t" style="left:297px;top:556.14px;font-size:12px;color:#444444;letter-spacing:0.027px"><span class="u">N</span>amen definieren...</div>
<div class="t" style="left:297px;top:580.44px;font-size:12px;color:#a6a6a6;letter-spacing:0.032px">Lin<span class="u">k</span>...</div>
<svg class="a" style="left:268px;top:154px" width="20" height="20"><path d="M5.5 2L12.5 12M14 2L7 12" stroke="#5a5a5a" stroke-width="1.6"/><circle cx="5.4" cy="13.8" r="2.4" fill="#fff" stroke="#2e75b6" stroke-width="1.3"/><circle cx="13.8" cy="13.8" r="2.4" fill="#fff" stroke="#2e75b6" stroke-width="1.3"/></svg>
<svg class="a" style="left:268px;top:179px" width="20" height="18"><path d="M2.5 2.5H8L10 4.5V12.5H2.5Z" fill="#fff" stroke="#5a5a5a" stroke-width="1"/><path d="M4 5.5H6M4 7.5H6M4 9.5H6" stroke="#2e75b6"/><path d="M8.5 5.5H14L16.5 8V15.5H8.5Z" fill="#fff" stroke="#5a5a5a" stroke-width="1"/><path d="M10 9.5H15M10 11.5H15M10 13.5H15" stroke="#2e75b6"/></svg>
<svg class="a" style="left:270px;top:202px" width="17" height="18"><path d="M1 2.5H14V16.5H2.5Q1 16.5 1 15Z" fill="#e8b96a"/><path d="M3.5 4.5V3.5Q3.5 2 5 2H6.3Q6.5 0.5 7.5 0.5Q8.5 0.5 8.7 2H10Q11.5 2 11.5 3.5V4.5Z" fill="#5a5a5a"/><path d="M8.5 8.5H13L16 11.5V16.5H8.5Z" fill="#fff" stroke="#5a5a5a" stroke-width="1"/></svg>
<svg class="a" style="left:296px;top:226px" width="24" height="24"><path d="M0 2.2H18V21H2Q0 21 0 19Z" fill="#e8b96a"/><path d="M3 5.5V3.8Q3 2.2 5 2.2H7Q7.3 0.3 9 0.3Q10.7 0.3 11 2.2H13Q15 2.2 15 3.8V5.5Z" fill="#5a5a5a"/><circle cx="9" cy="2" r="0.9" fill="#fff"/><path d="M10 9.5H19L21.5 12V22.5H10Z" fill="#fff" stroke="#5a5a5a" stroke-width="1.1"/></svg>
<svg class="a" style="left:326px;top:226px" width="24" height="24"><path d="M0 2.2H18V21.5H0Z" fill="#e8b96a"/><path d="M3.3 5.5H14.7V18.3H3.3Z" fill="#fff"/><path d="M3 5.5V3.8Q3 2.2 5 2.2H7Q7.3 0.3 9 0.3Q10.7 0.3 11 2.2H13Q15 2.2 15 3.8V5.5Z" fill="#5a5a5a"/><circle cx="9" cy="2" r="0.9" fill="#fff"/><path d="M3.3 18H14.7V21.5H3.3Z" fill="#fff"/><path d="M3.3 5.5H14.7V18.5H3.3Z" fill="#fff"/></svg>
<div class="t" style="left:331px;top:240.13px;font-size:11.3px;color:#3a3a3a;font-weight:bold;letter-spacing:-0.9px">12</div>
<svg class="a" style="left:356px;top:226px" width="24" height="24"><path d="M0 2.2H18V21.5H0Z" fill="#e8b96a"/><path d="M3.3 5.5H14.7V18.3H3.3Z" fill="#fff"/><path d="M3 5.5V3.8Q3 2.2 5 2.2H7Q7.3 0.3 9 0.3Q10.7 0.3 11 2.2H13Q15 2.2 15 3.8V5.5Z" fill="#5a5a5a"/><circle cx="9" cy="2" r="0.9" fill="#fff"/><path d="M7 5.5H14.7V21.5H7Z" fill="#fff"/></svg>
<div class="t" style="left:364.5px;top:233.61px;font-size:17px;color:#444;font-family:'Liberation Serif',serif;font-style:italic">f<span style="font-size:14px">x</span></div>
<svg class="a" style="left:386px;top:226px" width="24" height="24"><path d="M0 2.2H18V21.5H0Z" fill="#e8b96a"/><path d="M3.3 5.5H14.7V18.3H3.3Z" fill="#fff"/><path d="M3 5.5V3.8Q3 2.2 5 2.2H7Q7.3 0.3 9 0.3Q10.7 0.3 11 2.2H13Q15 2.2 15 3.8V5.5Z" fill="#5a5a5a"/><circle cx="9" cy="2" r="0.9" fill="#fff"/><path d="M6 18.3H14.7V21.5H6Z M14 8H18V18.3H14Z" fill="#fff"/><path d="M6.5 14.5Q7 10 12.5 9M12.5 9L10.5 7.2M12.5 9L10.8 11M6.5 14.5L5 12.7M6.5 14.5L8.3 13" stroke="#2e75b6" stroke-width="1.3" fill="none"/><path d="M6.5 18.5H15V22.5H6.5Z" fill="#fff" stroke="#5a5a5a" stroke-width="1"/><path d="M7 19H10.7V22H7Z" fill="#bdd7ee"/><path d="M16 9H20.5V17.5H16Z" fill="#fff" stroke="#5a5a5a" stroke-width="1"/><path d="M16.5 9.5H20V13H16.5Z" fill="#bdd7ee"/></svg>
<svg class="a" style="left:417px;top:226px" width="24" height="24"><path d="M0 2.2H18V21.5H0Z" fill="#e8b96a"/><path d="M3.3 5.5H14.7V18.3H3.3Z" fill="#fff"/><path d="M3 5.5V3.8Q3 2.2 5 2.2H7Q7.3 0.3 9 0.3Q10.7 0.3 11 2.2H13Q15 2.2 15 3.8V5.5Z" fill="#5a5a5a"/><circle cx="9" cy="2" r="0.9" fill="#fff"/><path d="M3.3 18H14.7V21.5H3.3Z" fill="#fff"/><path d="M13.5 16L19.5 7.5" stroke="#5a5a5a" stroke-width="2.2"/><path d="M4 22.8Q6 17 11 16Q14 17.5 12 20Q9.5 22.8 4 22.8Z" fill="#2e75b6"/></svg>
<div class="t" style="left:420.3px;top:231.91px;font-size:10.5px;color:#444;font-weight:bold;letter-spacing:-0.5px">%</div>
<svg class="a" style="left:447px;top:226px" width="24" height="24"><path d="M0 2.2H18V21.5H0Z" fill="#e8b96a"/><path d="M3.3 5.5H14.7V18.3H3.3Z" fill="#fff"/><path d="M3 5.5V3.8Q3 2.2 5 2.2H7Q7.3 0.3 9 0.3Q10.7 0.3 11 2.2H13Q15 2.2 15 3.8V5.5Z" fill="#5a5a5a"/><circle cx="9" cy="2" r="0.9" fill="#fff"/><path d="M3.3 17H20V24H3.3Z" fill="#fff"/><rect x="5.5" y="17.5" width="9" height="5.5" rx="2.75" fill="none" stroke="#2e75b6" stroke-width="2"/><rect x="11" y="17.5" width="9" height="5.5" rx="2.75" fill="none" stroke="#2e75b6" stroke-width="2"/></svg>
<svg class="a" style="left:268px;top:280px" width="20" height="18"><circle cx="11.5" cy="8.3" r="5.5" fill="#fff" stroke="#2e75b6" stroke-width="1.8"/><path d="M7.5 12.3L3.5 16.3" stroke="#2e75b6" stroke-width="2.4"/><rect x="10.8" y="8" width="1.5" height="3.5" fill="#333"/><rect x="10.8" y="5" width="1.5" height="1.5" fill="#333"/></svg>
<svg class="a" style="left:269px;top:382px" width="17" height="16"><path d="M15.5 2V14.6H2.6V11" fill="none" stroke="#a8a8a8" stroke-width="1.3"/><path d="M7.5 1.1H16.2V3.6H6.3Z" fill="#a8a8a8"/><path d="M8.7 5.7H11.5M7.5 8.8H13.8M7.5 11.8H12.5" stroke="#a8a8a8" stroke-width="1.4"/><path d="M4.3 0H8.2L6.2 4.3H8.6L1 11L3.6 5.5H1.2Z" fill="#d4d4d4"/></svg>
<svg class="a" style="left:268px;top:454px" width="20" height="18"><path d="M6.5 2.5H16.5Q17 2.5 17 3V11Q17 11.5 16.5 11.5H8.5L6 14.5V11.5H5Q4.5 11.5 4.5 11V8" fill="none" stroke="#5a5a5a" stroke-width="1.1"/><path d="M2 4.5H8M5 1.5V7.5" stroke="#3d9970" stroke-width="1.8"/></svg>
<svg class="a" style="left:268px;top:478px" width="20" height="18"><path d="M9.5 3.5H16.5Q17 3.5 17 4V12Q17 12.5 16.5 12.5H8.5L6 15.5V12.5H5Q4.5 12.5 4.5 12V9" fill="none" stroke="#5a5a5a" stroke-width="1.1"/><path d="M2 2L8.5 8.5M8.5 2L2 8.5" stroke="#d9472b" stroke-width="1.6"/></svg>
<svg class="a" style="left:270px;top:505px" width="17" height="18"><rect x="1.5" y="1.5" width="13" height="15" fill="#fff" stroke="#5a5a5a" stroke-width="1"/><rect x="1" y="1" width="14" height="3" fill="#2e75b6"/><circle cx="5" cy="8.5" r="1.1" fill="#5a5a5a"/><circle cx="5" cy="12" r="1.1" fill="none" stroke="#5a5a5a" stroke-width="0.8"/><path d="M8 8.5H12M8 12H12" stroke="#5a5a5a"/></svg>
<svg class="a" style="left:269px;top:576px" width="19" height="20"><defs><clipPath id="gl"><path d="M1 10.5A6.5 6.5 0 0 1 14 10.5Z"/></clipPath></defs><path d="M1.7 10.5A5.8 5.8 0 0 1 13.3 10.5" fill="none" stroke="#b0b0b0" stroke-width="1.4"/><g clip-path="url(#gl)" stroke="#b0b0b0" stroke-width="1.3" fill="none"><path d="M1 7H14"/><ellipse cx="7.5" cy="10.5" rx="2.6" ry="6"/></g><rect x="2.5" y="12" width="8.5" height="5.5" rx="2.75" fill="none" stroke="#b0b0b0" stroke-width="1.8"/><rect x="8" y="12" width="8.5" height="5.5" rx="2.75" fill="none" stroke="#b0b0b0" stroke-width="1.8"/></svg>
<div class="a" style="left:320px;top:264px;width:63px;height:25px;background:#fff;border:1px solid #bdbdbd;box-shadow:1px 1px 2px rgba(0,0,0,0.15)"></div>
<div class="t" style="left:325px;top:271.14px;font-size:12px;color:#575757;letter-spacing:-0.196px">Werte (W)</div>
<svg class="a" style="left:341px;top:236px" width="16" height="22"><path d="M1.2 1.1V17.8L5.2 13.9L8.7 19.6L10.9 18.4L7.7 13.1H13Z" fill="#fff" stroke="#000" stroke-width="1.1" stroke-linejoin="miter"/></svg>
<div class="a" style="left:579px;top:502px;width:385px;height:115px;background:#f0f0f0;border:1px solid #1883d7"></div>
<div class="a" style="left:580px;top:503px;width:383px;height:30px;background:#fff"></div>
<div class="t" style="left:588px;top:511.74px;font-size:12px;color:#000;letter-spacing:-0.04px">Microsoft Excel</div>
<svg class="a" style="left:942px;top:511px" width="12" height="12"><path d="M0.5 0.5L11.5 11.5M11.5 0.5L0.5 11.5" stroke="#000" stroke-width="1"/></svg>
<svg class="a" style="left:596px;top:546px" width="34" height="33"><path d="M17 1L33 32H1Z" fill="#ffd900" stroke="#f2a900" stroke-width="1"/><rect x="15.8" y="12" width="2.4" height="11" fill="#000"/><rect x="15.8" y="25" width="2.4" height="2.6" fill="#000"/></svg>
<div class="t" style="left:645.5px;top:556.74px;font-size:12px;color:#000;letter-spacing:-0.04px">Diese Aktion funktioniert nicht bei einer Mehrfachauswahl.</div>
<div class="a" style="left:722px;top:588px;width:99px;height:21px;background:#e1e1e1;border:2px solid #0078d7"></div>
<div class="t" style="left:722px;width:99px;text-align:center;top:592.5px;font-size:12px;color:#000">OK</div>
</body></html>
